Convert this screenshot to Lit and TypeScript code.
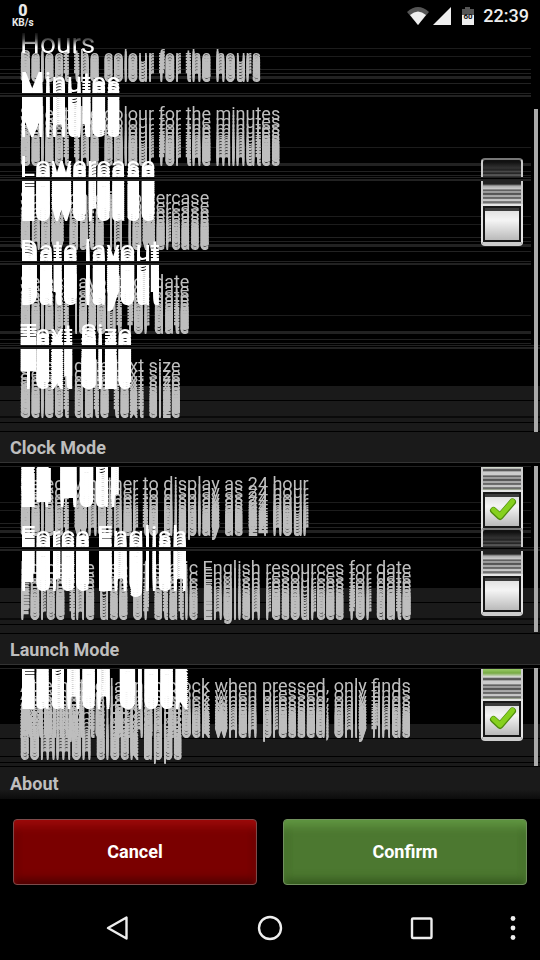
import { LitElement, html, css, svg, unsafeCSS, nothing } from "lit";
import { customElement, property } from "lit/decorators.js";

const TITLE_STEPS = [2, 4, 6, 8, 10, 12, 14, 16, 18, 20, 22, 24, 26, 28, 30, 32, 35, 38, 41, 45];
const SUMMARY_STEPS = [1, 2, 4, 5, 7, 8, 10, 11, 13, 14, 16, 17, 19, 21, 24, 28, 32, 38, 46];
const trail = (color: string, steps: number[], limit = 60) =>
  unsafeCSS(steps.filter((n) => n <= limit).map((n) => `0 -${n}px ${color}`).join(", "));

interface Item {
  title: string;
  summary: string;
  kind?: string;
  checked?: boolean;
}

const SECTIONS: { heading?: string; items: Item[] }[] = [
  {
    items: [
      { title: "Hours", summary: "Select the colour for the hours", kind: "first even" },
      { title: "Minutes", summary: "Select the colour for the minutes", kind: "odd" },
      { title: "Lowercase", summary: "Show date in lowercase", kind: "even", checked: false },
      { title: "Date layout", summary: "Select layout for date", kind: "odd" },
      { title: "Text Size", summary: "Select date text size", kind: "end" },
    ],
  },
  {
    heading: "Clock Mode",
    items: [
      { title: "24 Hour", summary: "Select whether to display as 24 hour", kind: "even", checked: true },
      { title: "Force English", summary: "Force the use of static English resources for date", kind: "end", checked: false },
    ],
  },
  {
    heading: "Launch Mode",
    items: [
      {
        title: "Launch Clock",
        summary: "Attempt to launch clock when pressed, only finds common clock apps",
        kind: "end last",
        checked: true,
      },
    ],
  },
  { heading: "About", items: [] },
];

@customElement("pref-row")
class PrefRow extends LitElement {
  @property({ attribute: false }) item!: Item;

  static styles = css`
    :host { display: block; }
    .row {
      position: relative;
      display: flex;
      align-items: center;
      min-height: 84px;
      box-sizing: border-box;
      padding: 15px 8px 9px 20px;
      margin-right: 9px;
    }
    .row::after {
      content: "";
      position: absolute;
      z-index: 2;
      left: 0;
      right: 0;
      top: -3px;
      height: 4px;
      background: linear-gradient(#222 0 1px, #000 1px 2px, #222 2px 4px);
    }
    .even {
      background: linear-gradient(
        transparent 36px, #1c1c1c 36px 37px, transparent 37px 44px, #1c1c1c 44px 45px,
        transparent 45px 57px, #222 57px 58px, transparent 58px 61px, #222 61px 62px,
        transparent 62px 64px, #222 64px 67px, transparent 67px 71px, #222 71px 72px, transparent 72px
      );
    }
    .odd {
      background: linear-gradient(
        transparent 51px, #1c1c1c 51px 52px, transparent 52px 67px, #222 67px 70px,
        transparent 70px 75px, #222 75px 76px, transparent 76px 79px, #222 79px 80px, transparent 80px
      );
    }
    .end {
      background: linear-gradient(
        transparent 38px, #1a1a1a 38px 52px, #000 52px 53px, #1a1a1a 53px 68px, #0a0a0a 68px 70px,
        #1a1a1a 70px 74px, #000 74px 75px, #1a1a1a 75px 83px, #000 83px
      );
      margin-right: 0;
      padding-right: 17px;
    }
    .first {
      min-height: 69px;
      padding-top: 0;
      background-position: 0 -15px;
      background-size: 100% 84px;
      background-repeat: no-repeat;
    }
    .first::after { display: none; }
    .last {
      padding-bottom: 3px;
      background: linear-gradient(
        transparent 56px, #1a1a1a 56px 70px, #000 70px 71px, #1a1a1a 71px 88px, #000 88px 89px,
        #1a1a1a 89px 94px, #000 94px 95px, #1a1a1a 95px 98px, #000 98px 99px, #1a1a1a 99px
      );
    }
    /* Own layer, so that the stacked copies are smoothed in grey and not per sub-pixel. */
    .words { flex: 1; min-width: 0; align-self: flex-start; will-change: transform; }
    .title {
      position: relative;
      z-index: 1;
      margin: 0 0 4px;
      font: 400 28px/34px Roboto, sans-serif;
      color: #fff;
      text-shadow: ${trail("#fff", TITLE_STEPS)};
      width: max-content;
    }
    .first .title {
      color: transparent;
      background: linear-gradient(#111 6px, #444 12px, #fff 20px);
      background-clip: text;
      -webkit-background-clip: text;
      text-shadow: none;
    }
    .summary {
      margin: 0;
      max-width: 410px;
      font: 400 18px/22px Roboto, sans-serif;
      color: #bebebe;
      text-shadow: ${trail("#bebebe", SUMMARY_STEPS)};
    }
    .first .summary { text-shadow: ${trail("#bebebe", SUMMARY_STEPS, 20)}; }
    .toggle {
      position: relative;
      z-index: 1;
      display: block;
      width: 42px;
      height: 42px;
    }
    .last .toggle { align-self: flex-start; margin-top: 16px; }
    .ghost {
      position: absolute;
      left: 0;
      right: 0;
      bottom: 36px;
      height: 52px;
      box-sizing: border-box;
      border: 2px solid #ccc;
      border-top-color: #777;
      border-bottom: 0;
      border-radius: 4px 4px 0 0;
      background: linear-gradient(
        #111 2px, #333 8px, #222 10px, #555 12px, #111 13px, #666 15px, #222 17px, #888 19px,
        #222 21px, #222 24px, #aaa 26px, #ccc 29px, #444 30px, #bbb 32px, #333 34px, #ccc 36px,
        #444 38px, #eee 40px, #555 42px, #f4f4f4 45px
      );
    }
    .ghost.on {
      background: linear-gradient(
        #111 2px, #333 8px, #222 10px, #555 12px, #9c6 14px, #7a4 18px, #ddd 22px, #333 24px,
        #ccc 26px, #ccc 29px, #444 30px, #bbb 32px, #333 34px, #ccc 36px, #444 38px, #eee 40px,
        #555 42px, #dfeecb 45px
      );
    }
    .box {
      appearance: none;
      position: relative;
      display: block;
      margin: 0;
      width: 42px;
      height: 42px;
      box-sizing: border-box;
      border: 2px solid #e4e4e4;
      border-bottom: 4px solid #ccc;
      border-radius: 0 0 4px 4px;
      background: linear-gradient(#d8d8d8, #f4f4f4 40%, #b4b4b4);
      box-shadow: inset 0 0 0 2px #181818, inset 0 5px 0 #3c3c3c;
    }
    .tick {
      position: absolute;
      left: 8px;
      top: 6px;
      width: 28px;
      height: 26px;
      pointer-events: none;
    }
  `;

  render() {
    const { title, summary, kind = "", checked } = this.item;
    return html`
      <div class="row ${kind}">
        <div class="words">
          <h3 class="title">${title}</h3>
          <p class="summary" id="summary">${summary}</p>
        </div>
        ${checked === undefined
          ? nothing
          : html`<label class="toggle">
              <span class="ghost ${checked ? "on" : ""}"></span>
              <input class="box" type="checkbox" aria-label=${title} aria-describedby="summary" .checked=${checked} />
              ${checked
                ? html`<svg class="tick" viewBox="0 0 28 26" aria-hidden="true">
                    <path d="M4.500 14.500 11 20.500 23.500 6" fill="none" stroke="#4d8a0c" stroke-width="7" stroke-linejoin="round" stroke-linecap="round" />
                    <path d="M4.500 14 11 20 23.500 5.500" fill="none" stroke="#86d01f" stroke-width="5" stroke-linejoin="round" stroke-linecap="round" />
                  </svg>`
                : nothing}
            </label>`}
      </div>
    `;
  }
}

@customElement("app-root")
class AppRoot extends LitElement {
  static styles = css`
    :host {
      display: flex;
      flex-direction: column;
      min-height: 100vh;
      background: #000;
      color: #fff;
      font-family: Roboto, sans-serif;
      overflow: hidden;
    }
    .status {
      display: flex;
      align-items: center;
      height: 22px;
      padding: 5px 11px 0 12px;
    }
    .speed {
      display: flex;
      flex-direction: column;
      align-items: center;
      font: 700 10px/10px Roboto, sans-serif;
      color: #e8e8e8;
      margin-right: auto;
    }
    .speed b { font-size: 16px; line-height: 14px; }
    .signals { width: 68px; height: 20px; margin-right: 8px; }
    .clock { font: 500 18px/22px Roboto, sans-serif; color: #eee; }
    .section { position: relative; }
    .heading {
      margin: 0;
      padding: 0 10px 3px;
      height: 31px;
      box-sizing: border-box;
      border-bottom: 1px solid #333;
      margin-bottom: 3px;
      padding-top: 2px;
      background: #1a1a1a;
      font: 700 18px/28px Roboto, sans-serif;
      color: #bebebe;
    }
    .section:last-child .heading {
      border: 0;
      background: linear-gradient(#1a1a1a 70%, #0c0c0c);
    }
    .list { position: relative; overflow: hidden; }
    .bar {
      position: absolute;
      z-index: 3;
      right: 2px;
      top: 0;
      bottom: 2px;
      width: 4px;
      background: #aaa;
    }
    .opening .bar { top: 82px; bottom: 0; }
    .actions {
      display: grid;
      grid-template-columns: 1fr 1fr;
      gap: 26px;
      padding: 17px 13px 0;
    }
    .action {
      height: 66px;
      border: 1px solid #777;
      border-radius: 4px;
      color: #fff;
      font: 700 18px/24px Roboto, sans-serif;
    }
    .cancel {
      background: #7a0000;
      border-color: #7c4a4a;
      box-shadow: inset 0 8px 10px -2px #a00a0a, inset 0 -6px 10px -2px #4c0000, inset 0 0 8px #5c0000;
    }
    .confirm {
      background: #4c7830;
      border-color: #71905e;
      box-shadow: inset 0 8px 10px -2px #629843, inset 0 -6px 10px -2px #35591f, inset 0 0 8px #3c6424;
    }
    .nav {
      display: grid;
      grid-template-columns: 1fr 1fr 1fr 30px;
      justify-items: center;
      align-items: center;
      padding: 19px 12px 0 42px;
    }
    .key {
      display: block;
      padding: 0;
      border: 0;
      background: none;
      width: 30px;
      height: 48px;
    }
    .glyph {
      display: block;
      width: 30px;
      height: 30px;
      margin: 0 auto;
      fill: none;
      stroke: #eee;
      stroke-width: 2.400;
      stroke-linejoin: round;
    }
    .dots { fill: #eee; stroke: none; }
  `;

  private key(label: string, shape: unknown, extra = "") {
    return html`<button class="key" aria-label=${label}>
      <svg class="glyph ${extra}" viewBox="0 0 30 30" aria-hidden="true">${shape}</svg>
    </button>`;
  }

  render() {
    return html`
      <header class="status">
        <div class="speed"><b>0</b><span>KB/s</span></div>
        <svg class="signals" viewBox="0 0 68 20" aria-hidden="true">
          <path d="M0 6Q11-4 22 6L11 19Z" fill="#555" />
          <path d="M3 9Q11 2 19 9L11 19Z" fill="#eee" />
          <path d="M26 19 44 1V19Z" fill="#eee" />
          <path d="M55 3H58V1H63V3H67V9H55Z" fill="#555" />
          <path d="M55 9H67V19H55Z" fill="#eee" />
          <text x="61" y="13" text-anchor="middle" font-family="Roboto" font-weight="700" font-size="8" fill="#111">60</text>
        </svg>
        <time class="clock">22:39</time>
      </header>
      <main>
        ${SECTIONS.map(
          ({ heading, items }) => html`<section class="section ${heading ? "" : "opening"}">
            ${heading ? html`<h2 class="heading">${heading}</h2>` : nothing}
            ${items.length
              ? html`<div class="list">
                  ${items.map((item) => html`<pref-row .item=${item}></pref-row>`)}
                  <div class="bar"></div>
                </div>`
              : nothing}
          </section>`
        )}
      </main>
      <div class="actions">
        <button class="action cancel">Cancel</button>
        <button class="action confirm">Confirm</button>
      </div>
      <nav class="nav">
        ${this.key("Back", svg`<path d="M5 15 23.500 4.500V25.500Z" />`)}
        ${this.key("Home", svg`<circle cx="15" cy="15" r="11" />`)}
        ${this.key("Recent apps", svg`<rect x="5" y="5.500" width="19.500" height="19.500" rx="1" />`)}
        ${this.key("Menu", svg`<circle cx="15" cy="5.500" r="2.400" /><circle cx="15" cy="15" r="2.400" /><circle cx="15" cy="24.500" r="2.400" />`, "dots")}
      </nav>
    `;
  }
}
